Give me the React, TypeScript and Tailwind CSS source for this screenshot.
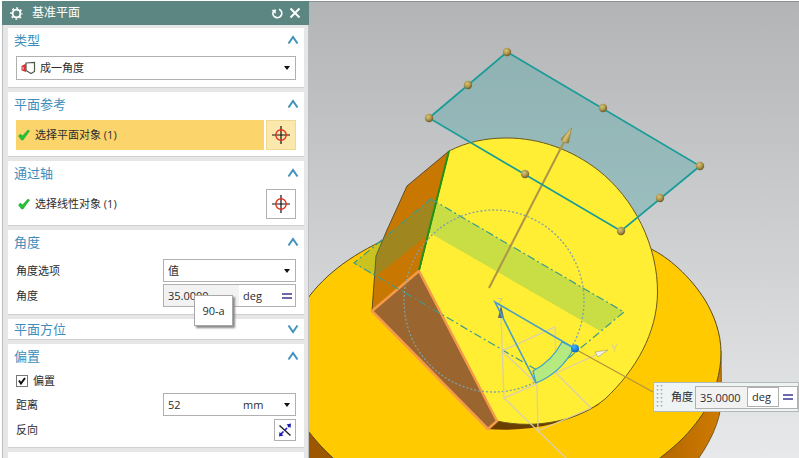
import React, { useState } from 'react';

interface GroupProps {
  title: string;
  open?: boolean;
  className?: string;
  children?: React.ReactNode;
}

const Chevron: React.FC<{ up: boolean }> = ({ up }) => (
  <svg width="12" height="12" viewBox="0 0 12 12" fill="none" stroke="#3f93bd" strokeWidth="2">
    <path d={up ? 'M1.500 9.500 L6 3 L10.500 9.500' : 'M1.500 2.500 L6 9 L10.500 2.500'} />
  </svg>
);

const Caret = () => (
  <svg className="absolute right-1 top-1/2 -translate-y-1/2 pointer-events-none" width="8" height="5" viewBox="0 0 8 5">
    <path d="M1 0.5 H7 L4 4.5 Z" fill="#111" />
  </svg>
);

const Check = () => (
  <svg width="12" height="12" viewBox="0 0 12 12" className="shrink-0">
    <path d="M0.5 7 L2.5 5 L4.5 7 L10 1 L11.5 2 L5 11 L3.5 11 Z" fill="#21c437" stroke="#149a28" strokeWidth="0.5" />
  </svg>
);

const Target = () => (
  <svg width="18" height="18" viewBox="0 0 18 18" fill="none">
    <path d="M9 0 V18 M0 9 H18" stroke="#111" strokeWidth="1.2" />
    <circle cx="9" cy="9" r="5.2" stroke="#e0301e" strokeWidth="1.4" />
  </svg>
);

const Equals = () => (
  <svg width="10" height="6" viewBox="0 0 10 6">
    <path d="M0 1 H10 M0 5 H10" stroke="#3a3a90" strokeWidth="1.6" />
  </svg>
);

const Group: React.FC<GroupProps> = ({ title, open = true, className = '', children }) => (
  <section className={`bg-white border-b border-[#cfcfcf] ${className}`}>
    <button
      aria-expanded={open}
      className={`w-full flex items-center justify-between pl-1.5 pr-[5px] text-[13px] text-[#3f8dba] ${open ? 'h-6' : 'h-5'}`}
    >
      <span>{title}</span>
      <Chevron up={open} />
    </button>
    {children}
  </section>
);

// sphere handles around the new datum plane
const handles = [
  [507, 52], [468, 85], [429, 118], [603, 108],
  [700, 166], [660, 198], [621, 231], [525, 174],
];

const Scene = () => (
  <svg
    className="absolute inset-0 w-full h-full"
    viewBox="309 2 490 456"
    preserveAspectRatio="xMinYMin slice"
    fill="none"
  >
    <defs>
      <radialGradient id="ball" cx="0.4" cy="0.35" r="0.65">
        <stop offset="0" stopColor="#d9c577" />
        <stop offset="0.6" stopColor="#a8924a" />
        <stop offset="1" stopColor="#6b5a28" />
      </radialGradient>
      <radialGradient id="blueBall" cx="0.4" cy="0.3" r="0.7">
        <stop offset="0" stopColor="#3fb4ff" />
        <stop offset="1" stopColor="#0668c4" />
      </radialGradient>
      <linearGradient id="side" x1="670" y1="0" x2="722" y2="0" gradientUnits="userSpaceOnUse">
        <stop offset="0" stopColor="#b86a00" />
        <stop offset="1" stopColor="#d07c00" />
      </linearGradient>
      <linearGradient id="cone" x1="562" y1="136" x2="569" y2="140" gradientUnits="userSpaceOnUse">
        <stop offset="0" stopColor="#7d692c" />
        <stop offset="0.5" stopColor="#dcc674" />
        <stop offset="1" stopColor="#94803a" />
      </linearGradient>
    </defs>

    {/* datum plane fill */}
    <path d="M507 52 L700 166 L621 231 L429 118 Z" fill="#4da5a5" fillOpacity="0.38" />

    {/* base disc */}
    <path d="M300 420 L300 470 L350 470 Z" fill="#9c5700" />
    <path d="M721 351 L721.500 400 Q720 432 690 470 L640 470 Z" fill="url(#side)" stroke="#5a4a20" strokeWidth="0.8" />
    <path
      d="M300 310 C316 283 342 260 382 241 L651 249 C668 257 690 276 705 300 C714 315 721 333 721 353 C721 372 715 394 704 412 C690 433 676 447 645 469 L346 469 C330 456 318 445 300 420 Z"
      fill="#ffca00"
      stroke="#5a4a20"
      strokeWidth="1"
    />

    {/* boss */}
    <path d="M487 429 L497 421 L585 408 L600 404 Q550 434 487 429 Z" fill="#6a3d00" />
    <path
      d="M449 151 C467 142 485 138 507 138 C540 138 572 150 598 170 C634 198 658 246 657.500 293 C657 333 636 370 605 399 C580 420 537 430 497 421 L419 271 Z"
      fill="#ffee33"
      stroke="#6b5a1c"
      strokeWidth="1"
    />
    <path d="M449 151 L407 186 L387 230 L376 256 L372 311 L419 271 Z" fill="#c87800" stroke="#5f4c2a" strokeWidth="1" />
    <path d="M431 199 L624 312 L600 331 L430 233 L375 277 L354 263 Z" fill="#2ead78" fillOpacity="0.26" />
    <path d="M419 271 L497 421 L488 429 L372 311 Z" fill="#9a652e" stroke="#f59a48" strokeWidth="2.5" strokeLinejoin="round" />
    <path d="M449 151 L419 270" stroke="#1f9414" strokeWidth="2" />

    {/* previous plane position */}
    <path d="M431 199 L624 312 L547 376 L354 263 Z" stroke="#3c9c8c" strokeWidth="1.2" strokeDasharray="8 3 2 3" />
    <ellipse cx="494" cy="301" rx="90" ry="91" stroke="#7da0ac" strokeWidth="1.3" strokeDasharray="2 2" />

    {/* triad */}
    <g stroke="#d9cfae" strokeWidth="1.3">
      <path d="M501 316 L504 398 L537 384 L538 431 L504 398" />
      <path d="M537 384 L502 351 L555 327 L556 373 L591 408" />
      <path d="M556 373 L598 354 M538 431 L566 458 M538 431 L591 408" />
    </g>
    <path d="M501 305 L498 318 L504 318 Z" fill="#5e6a78" />
    <path d="M608 350 L595 352 L598 357 Z" fill="#f2efe6" stroke="#a59a60" strokeWidth="0.6" />
    <text x="497" y="306" fontSize="10" fill="#cfc4a0" className="font-['Open_Sans',sans-serif]">Z</text>
    <text x="611" y="352" fontSize="11" fill="#d9cfae" className="font-['Open_Sans',sans-serif]">Y</text>

    {/* angle handle */}
    <path d="M533 371 Q552 361 562 342 L574 348 Q561 373 536 383 Z" fill="#b4ea80" stroke="#3f9fd0" strokeWidth="1.2" />
    <path d="M536 383 L495 302 L574 348" stroke="#4a9fc4" strokeWidth="1.6" />
    <path d="M575 349 L653 392" stroke="#b5963a" strokeWidth="1.4" />
    <circle cx="575" cy="348.500" r="4" fill="url(#blueBall)" />

    {/* normal arrow and plane outline */}
    <path d="M489 288 L565 140" stroke="#ad9448" strokeWidth="2" />
    <path d="M571.500 128 L561 139 Q563 143.500 568.500 143 Z" fill="url(#cone)" stroke="#8a7436" strokeWidth="0.5" />
    <path d="M507 52 L700 166 L621 231 L429 118 Z" stroke="#189c98" strokeWidth="1.7" />
    {handles.map(([x, y]) => (
      <circle key={`${x}-${y}`} cx={x} cy={y} r="4.200" fill="url(#ball)" />
    ))}
  </svg>
);

export default function App() {
  const [angle, setAngle] = useState('35.0000');
  const [distance, setDistance] = useState('52');
  const [offset, setOffset] = useState(true);

  return (
    <div className="min-h-screen flex bg-white pt-px pl-0.5 text-[11px] leading-4 text-[#2c2c2c] font-['Open_Sans','Noto_Sans_CJK_SC',sans-serif]">
      {/* Dialog */}
      <aside className="w-[307px] shrink-0 flex flex-col bg-[#e6e6e6]">
        <header className="h-6 shrink-0 flex items-center pl-2 pr-2 bg-[#5b8682] text-white">
          <svg width="13" height="13" viewBox="0 0 13 13" fill="none" stroke="#fff">
            <circle cx="6.500" cy="6.500" r="3.900" strokeWidth="1.9" />
            <circle cx="6.500" cy="6.500" r="5.500" strokeWidth="1.5" strokeDasharray="2 2.320" strokeDashoffset="1" />
          </svg>
          <h1 className="ml-[9px] flex-1 text-[12px]">基准平面</h1>
          <button aria-label="重置" className="mr-1.5">
            <svg width="12" height="12" viewBox="0 0 12 12" fill="none">
              <path d="M8 2.200 A4.400 4.400 0 1 1 2.200 4.800" stroke="#fff" strokeWidth="1.7" />
              <path d="M0.500 3 L5 2.500 L4.500 7 Z" fill="#fff" />
            </svg>
          </button>
          <button aria-label="关闭">
            <svg width="12" height="12" viewBox="0 0 12 12" stroke="#fff" strokeWidth="2">
              <path d="M1.500 1.500 L10.500 10.500 M10.500 1.500 L1.500 10.500" />
            </svg>
          </button>
        </header>

        <div className="flex-1 flex flex-col gap-1 pt-[3px] pl-[5px] pr-1 border-x border-[#bdbdbd]">
          <Group title="类型" className="pb-[7px]">
            <div className="relative mx-2 mt-1 h-6 flex items-center border border-[#b0b0b0] pl-1">
              <svg width="15" height="14" viewBox="0 0 15 14" fill="none">
                <path d="M5 2 L13.500 1.500 V10.500 L10 12.500 L5 9.500 Z" fill="#fff" stroke="#4c5a4c" strokeWidth="1.2" />
                <path d="M0.500 5 L5 2.500 V11 L0.500 9.500 Z" fill="#d9333a" />
                <path d="M2 6 V8.500" stroke="#fff" strokeWidth="0.8" />
              </svg>
              <select aria-label="类型" className="appearance-none flex-1 h-full pl-1 outline-none">
                <option>成一角度</option>
              </select>
              <Caret />
            </div>
          </Group>

          <Group title="平面参考" className="pb-1.5">
            <div className="mx-2 mt-1 flex gap-0.5">
              <button className="flex-1 h-[30px] flex items-center gap-[5px] pl-0.5 bg-[#fcd46c]">
                <Check />
                <span>选择平面对象 (1)</span>
              </button>
              <button aria-label="选择平面" className="w-[30px] h-[30px] flex items-center justify-center bg-[#fbe8ac] border border-[#f0d890]">
                <Target />
              </button>
            </div>
          </Group>

          <Group title="通过轴" className="pb-1.5">
            <div className="mx-2 mt-1 flex gap-0.5">
              <button className="flex-1 h-[30px] flex items-center gap-[5px] pl-0.5">
                <Check />
                <span>选择线性对象 (1)</span>
              </button>
              <button aria-label="选择轴" className="w-[30px] h-[30px] flex items-center justify-center border border-[#b0b0b0]">
                <Target />
              </button>
            </div>
          </Group>

          <Group title="角度" className="pb-[7px]">
            <div className="mx-2 mt-[5px] flex flex-col gap-0.5">
              <div className="flex items-center justify-between">
                <label htmlFor="angle-option">角度选项</label>
                <div className="relative w-[133px] h-[23px] border border-[#b0b0b0]">
                  <select id="angle-option" className="appearance-none w-full h-full pl-1 outline-none">
                    <option>值</option>
                  </select>
                  <Caret />
                </div>
              </div>
              <div className="flex items-center justify-between">
                <label htmlFor="angle">角度</label>
                <div className="relative w-[133px] h-[23px] flex items-center border border-[#b0b0b0]">
                  <input
                    id="angle"
                    value={angle}
                    onChange={(e) => setAngle(e.target.value)}
                    className="w-[75px] h-full pl-1 bg-[#f2f2f2] outline-none"
                  />
                  <span className="flex-1 pl-1">deg</span>
                  <button aria-label="角度公式" className="mr-[3px]">
                    <Equals />
                  </button>
                  <div
                    role="tooltip"
                    className="absolute left-[30px] top-[10px] w-[39px] h-[31px] flex items-center justify-center bg-white border border-[#a8a8a8] shadow-[2px_2px_2px_#888]"
                  >
                    90-a
                  </div>
                </div>
              </div>
            </div>
          </Group>

          <Group title="平面方位" open={false} />

          <Group title="偏置" className="pb-1.5">
            <div className="mx-2 flex flex-col">
              <label className="h-[25px] flex items-center gap-[5px]">
                <span className="relative flex">
                  <input
                    type="checkbox"
                    checked={offset}
                    onChange={(e) => setOffset(e.target.checked)}
                    className="peer appearance-none w-3 h-3 bg-white border border-[#777]"
                  />
                  <svg className="absolute inset-0 hidden peer-checked:block pointer-events-none" width="12" height="12" viewBox="0 0 12 12" fill="none">
                    <path d="M3 5.500 L5 8.500 L9 3" stroke="#111" strokeWidth="2" />
                  </svg>
                </span>
                偏置
              </label>
              <div className="flex items-center justify-between">
                <label htmlFor="distance">距离</label>
                <div className="relative w-[133px] h-[23px] flex items-center border border-[#b0b0b0]">
                  <input
                    id="distance"
                    value={distance}
                    onChange={(e) => setDistance(e.target.value)}
                    className="w-[75px] h-full pl-1 outline-none"
                  />
                  <span className="flex-1 pl-1">mm</span>
                  <Caret />
                </div>
              </div>
              <div className="mt-[3px] flex items-center justify-between">
                <span>反向</span>
                <button aria-label="反向" className="w-[22px] h-[22px] flex items-center justify-center border border-[#b0b0b0]">
                  <svg width="14" height="14" viewBox="0 0 14 14" fill="none">
                    <path d="M1.500 2.500 L12.500 12.500" stroke="#222" strokeWidth="1.4" />
                    <path d="M3 11 L11 3" stroke="#1a1ab4" strokeWidth="1.6" strokeDasharray="3.500 1.500" />
                    <path d="M13 0.500 L12.500 5 L8.500 1.500 Z M1 13.500 L1.500 9 L5.500 12.500 Z" fill="#1a1ab4" />
                  </svg>
                </button>
              </div>
            </div>
          </Group>

          <div className="flex-1 bg-white" />
        </div>
      </aside>

      {/* Graphics window */}
      <main className="relative flex-1 overflow-hidden border-t border-[#8b9292] bg-linear-to-b from-[#b3b4b6] to-[#e8e9eb]">
        <Scene />
        <div className="absolute right-0 top-[380px] h-[30px] flex items-center bg-[#eef3f3] border border-[#b4b8b8] pl-0.5">
          <svg width="7" height="26" viewBox="0 0 7 26">
            <path d="M1.500 1 V25 M5.500 1 V25" stroke="#a8adad" strokeWidth="1.6" strokeDasharray="1.600 2.400" />
          </svg>
          <label htmlFor="float-angle" className="ml-2 mr-0.5">角度</label>
          <div className="h-[23px] flex items-center bg-white border border-[#b0b0b0]">
            <input
              id="float-angle"
              value={angle}
              onChange={(e) => setAngle(e.target.value)}
              className="w-[51px] h-full pl-1 bg-[#f2f2f2] outline-none"
            />
            <span className="w-8 h-5 flex items-center pl-1 border border-[#b0b0b0]">deg</span>
            <button aria-label="公式" className="w-[18px] flex justify-center">
              <Equals />
            </button>
          </div>
        </div>
      </main>
    </div>
  );
}
